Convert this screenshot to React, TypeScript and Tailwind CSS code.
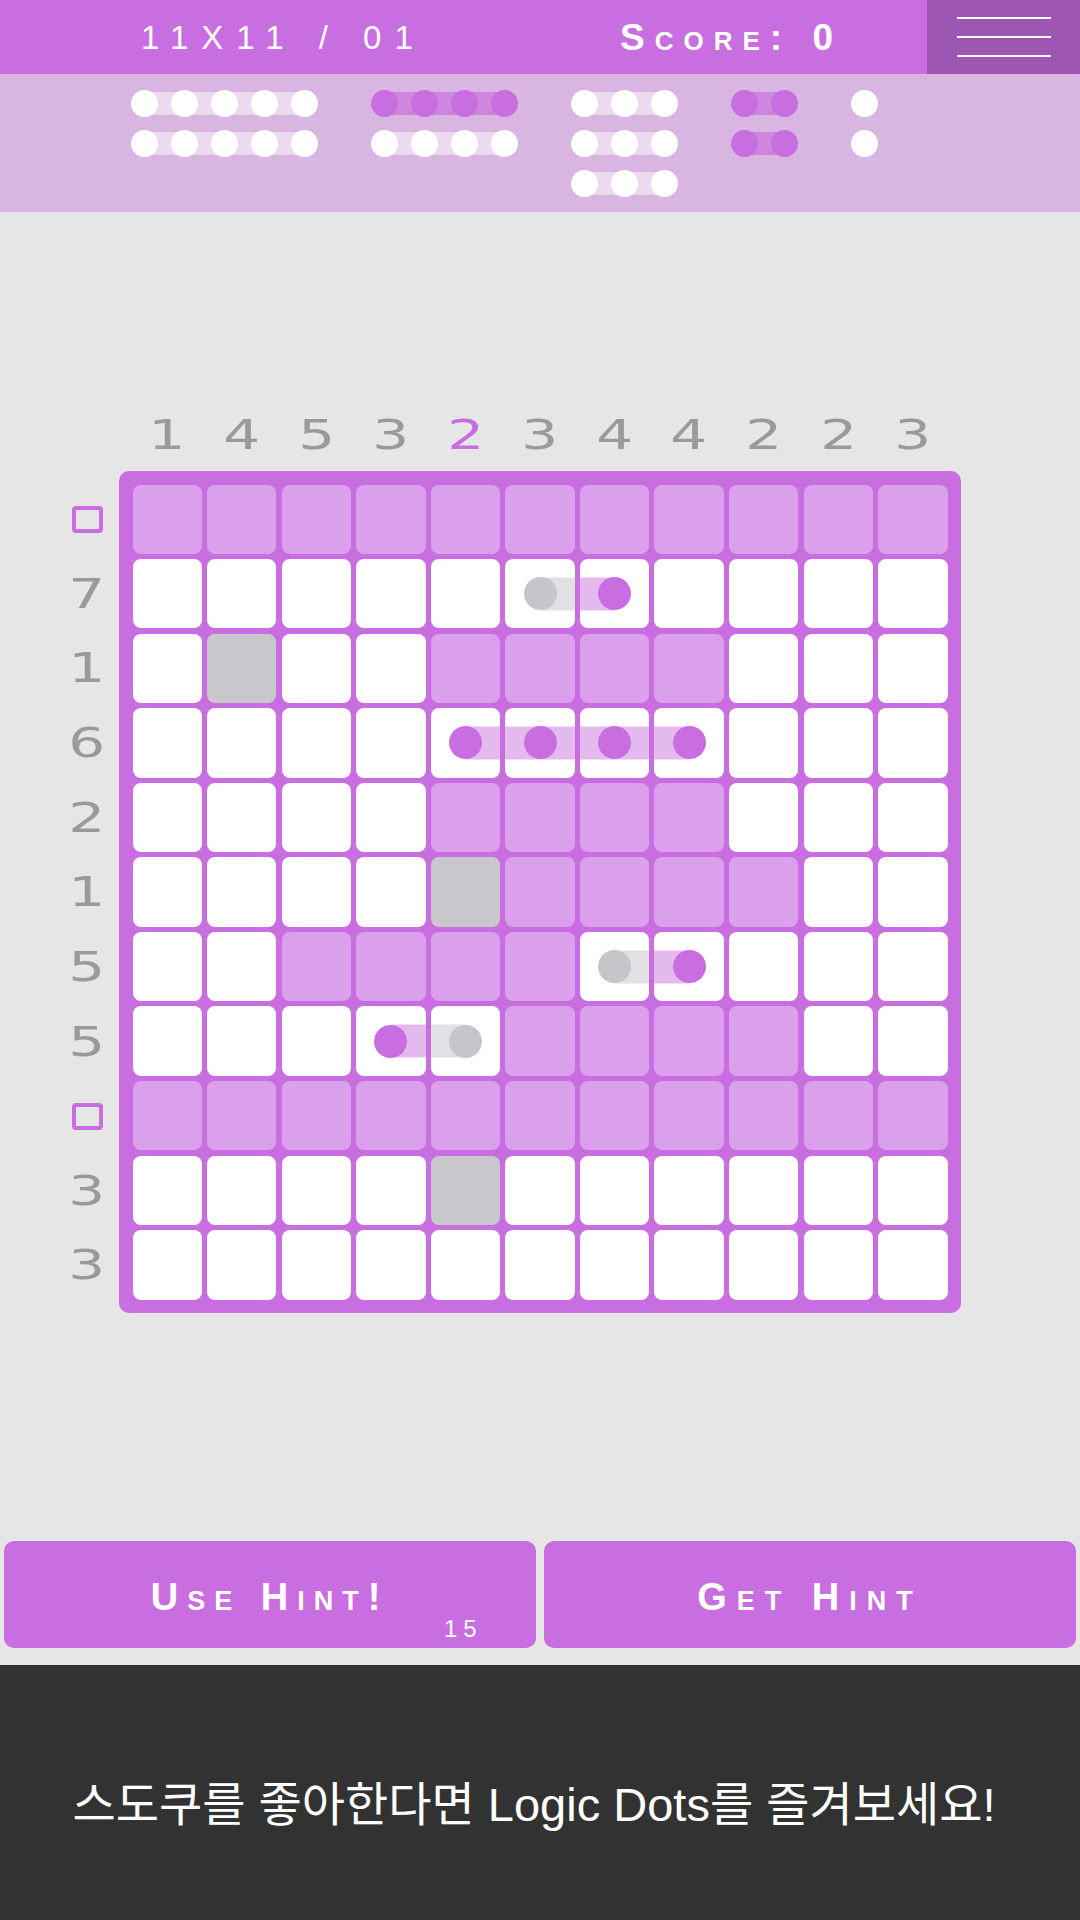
import React from "react";

const PURPLE = "#c86ee0";

// p = light purple cell, w = white, g = gray, P = white with purple dot, G = white with gray dot
const BOARD = [
  "ppppppppppp",
  "wwwwwGPwwww",
  "wgwwppppwww",
  "wwwwPPPPwww",
  "wwwwppppwww",
  "wwwwgppppww",
  "wwppppGPwww",
  "wwwPGppppww",
  "ppppppppppp",
  "wwwwgwwwwww",
  "wwwwwwwwwww",
];

const COL_CLUES = [1, 4, 5, 3, 2, 3, 4, 4, 2, 2, 3];
const ROW_CLUES = [0, 7, 1, 6, 2, 1, 5, 5, 0, 3, 3];

const PIECES = [
  { n: 5, rows: ["w", "w"] },
  { n: 4, rows: ["p", "w"] },
  { n: 3, rows: ["w", "w", "w"] },
  { n: 2, rows: ["p", "p"] },
  { n: 1, rows: ["w", "w"] },
];

const isDot = (c: string | undefined) => c === "P" || c === "G";

const Cell = ({ row, col }: { row: string; col: number }) => {
  const c = row[col];
  if (c === "p") return <div className="rounded-[8px] bg-[#dba0eb]" />;
  if (c === "g") return <div className="rounded-[8px] bg-[#c8c8cc]" />;
  if (c === "w") return <div className="rounded-[8px] bg-white" />;

  const bar = c === "P" ? "bg-[#e4b9ee]" : "bg-[#e1e1e3]";
  return (
    <div className="relative flex items-center justify-center rounded-[8px] bg-white">
      {isDot(row[col - 1]) && (
        <div className={`absolute left-0 right-1/2 top-1/2 h-[33px] -translate-y-1/2 ${bar}`} />
      )}
      {isDot(row[col + 1]) && (
        <div className={`absolute left-1/2 right-0 top-1/2 h-[33px] -translate-y-1/2 ${bar}`} />
      )}
      <div
        className={`relative h-[33px] w-[33px] rounded-full ${
          c === "P" ? "bg-[#c86ee0]" : "bg-[#c6c6ca]"
        }`}
      />
    </div>
  );
};

const Header = () => (
  <header className="flex h-[74px] bg-[#c86ee0] text-white [font-family:'Liberation_Sans',sans-serif]">
    <div className="flex flex-1 items-center pl-[141px] pt-[2px]">
      <span className="w-[479px] text-[33px] uppercase tracking-[13px]">11x11 / 01</span>
      <span className="text-[37px] font-bold tracking-[10px] [font-variant-caps:small-caps]">
        Score: 0
      </span>
    </div>
    <button className="flex w-[153px] flex-col items-center justify-center gap-[17px] bg-[#9d57b3]">
      <span className="h-[2px] w-[94px] bg-white" />
      <span className="h-[2px] w-[94px] bg-white" />
      <span className="h-[2px] w-[94px] bg-white" />
    </button>
  </header>
);

const PieceTray = () => (
  <div className="flex h-[138px] items-start gap-[53px] bg-[#d9b6e2] pl-[131px] pt-[16px]">
    {PIECES.map((piece, i) => (
      <div key={i} className="flex flex-col gap-[13px]">
        {piece.rows.map((kind, r) => (
          <div key={r} className="relative flex gap-[13px]">
            {piece.n > 1 && (
              <div
                className={`absolute bottom-[2px] left-[13px] right-[13px] top-[2px] ${
                  kind === "p" ? "bg-[#cd85de]" : "bg-[#ebdaf0]"
                }`}
              />
            )}
            {Array.from({ length: piece.n }).map((_, d) => (
              <div
                key={d}
                className={`relative h-[27px] w-[27px] rounded-full ${
                  kind === "p" ? "bg-[#c86ee0]" : "bg-white"
                }`}
              />
            ))}
          </div>
        ))}
      </div>
    ))}
  </div>
);

const Board = () => (
  <div className="flex flex-1 pl-[55px] pt-[198px] [font-family:'DejaVu_Sans',sans-serif]">
    <div className="w-[64px]">
      <div className="h-[61px]" />
      <div className="flex flex-col gap-[5.2px] pt-[13.5px]">
        {ROW_CLUES.map((n, i) => (
          <div key={i} className="flex h-[69.45px] items-center justify-center">
            {n === 0 ? (
              <div className="h-[27px] w-[31px] rounded-[4px] border-[4px] border-[#c86ee0]" />
            ) : (
              <span className="inline-block scale-x-[1.45] text-[40px] font-medium leading-none text-[#9a9a9a]">
                {n}
              </span>
            )}
          </div>
        ))}
      </div>
    </div>
    <div className="w-[842px]">
      <div className="grid h-[50px] grid-cols-11 gap-x-[5.2px] px-[13.5px]">
        {COL_CLUES.map((n, i) => (
          <div key={i} className="flex items-center justify-center">
            <span
              className={`inline-block scale-x-[1.45] text-[40px] font-medium leading-none ${
                i === 4 ? "text-[#c86ee0]" : "text-[#9a9a9a]"
              }`}
            >
              {n}
            </span>
          </div>
        ))}
      </div>
      <div
        className="mt-[11px] grid h-[842px] w-[842px] grid-cols-11 grid-rows-11 gap-[5.2px] rounded-[10px] p-[13.5px]"
        style={{ backgroundColor: PURPLE }}
      >
        {BOARD.map((row, r) =>
          row.split("").map((_, c) => <Cell key={`${r}-${c}`} row={row} col={c} />)
        )}
      </div>
    </div>
  </div>
);

const HintButtons = () => (
  <div className="flex gap-[8px] px-[4px] pb-[17px] text-white [font-family:'Liberation_Sans',sans-serif]">
    <button className="relative flex h-[107px] flex-1 items-center justify-center rounded-[10px] bg-[#c86ee0] pt-[6px]">
      <span className="text-[38px] font-bold tracking-[9px] [font-variant-caps:small-caps]">
        Use Hint!
      </span>
      <span className="absolute left-[440px] top-[70px] text-[24px] tracking-[6px]">15</span>
    </button>
    <button className="flex h-[107px] flex-1 items-center justify-center rounded-[10px] bg-[#c86ee0] pt-[6px]">
      <span className="text-[38px] font-bold tracking-[10px] [font-variant-caps:small-caps]">
        Get Hint
      </span>
    </button>
  </div>
);

const Footer = () => (
  <footer className="flex h-[255px] items-center justify-center bg-[#323232] pt-[26px] text-white">
    <p className="pr-[12px] text-[47px] [font-family:'Liberation_Sans','Noto_Sans_CJK_KR',sans-serif]">
      스도쿠를 좋아한다면 Logic Dots를 즐겨보세요!
    </p>
  </footer>
);

export default function App() {
  return (
    <div className="flex h-[1920px] w-[1080px] flex-col bg-[#e6e6e6]">
      <Header />
      <PieceTray />
      <Board />
      <HintButtons />
      <Footer />
    </div>
  );
}
